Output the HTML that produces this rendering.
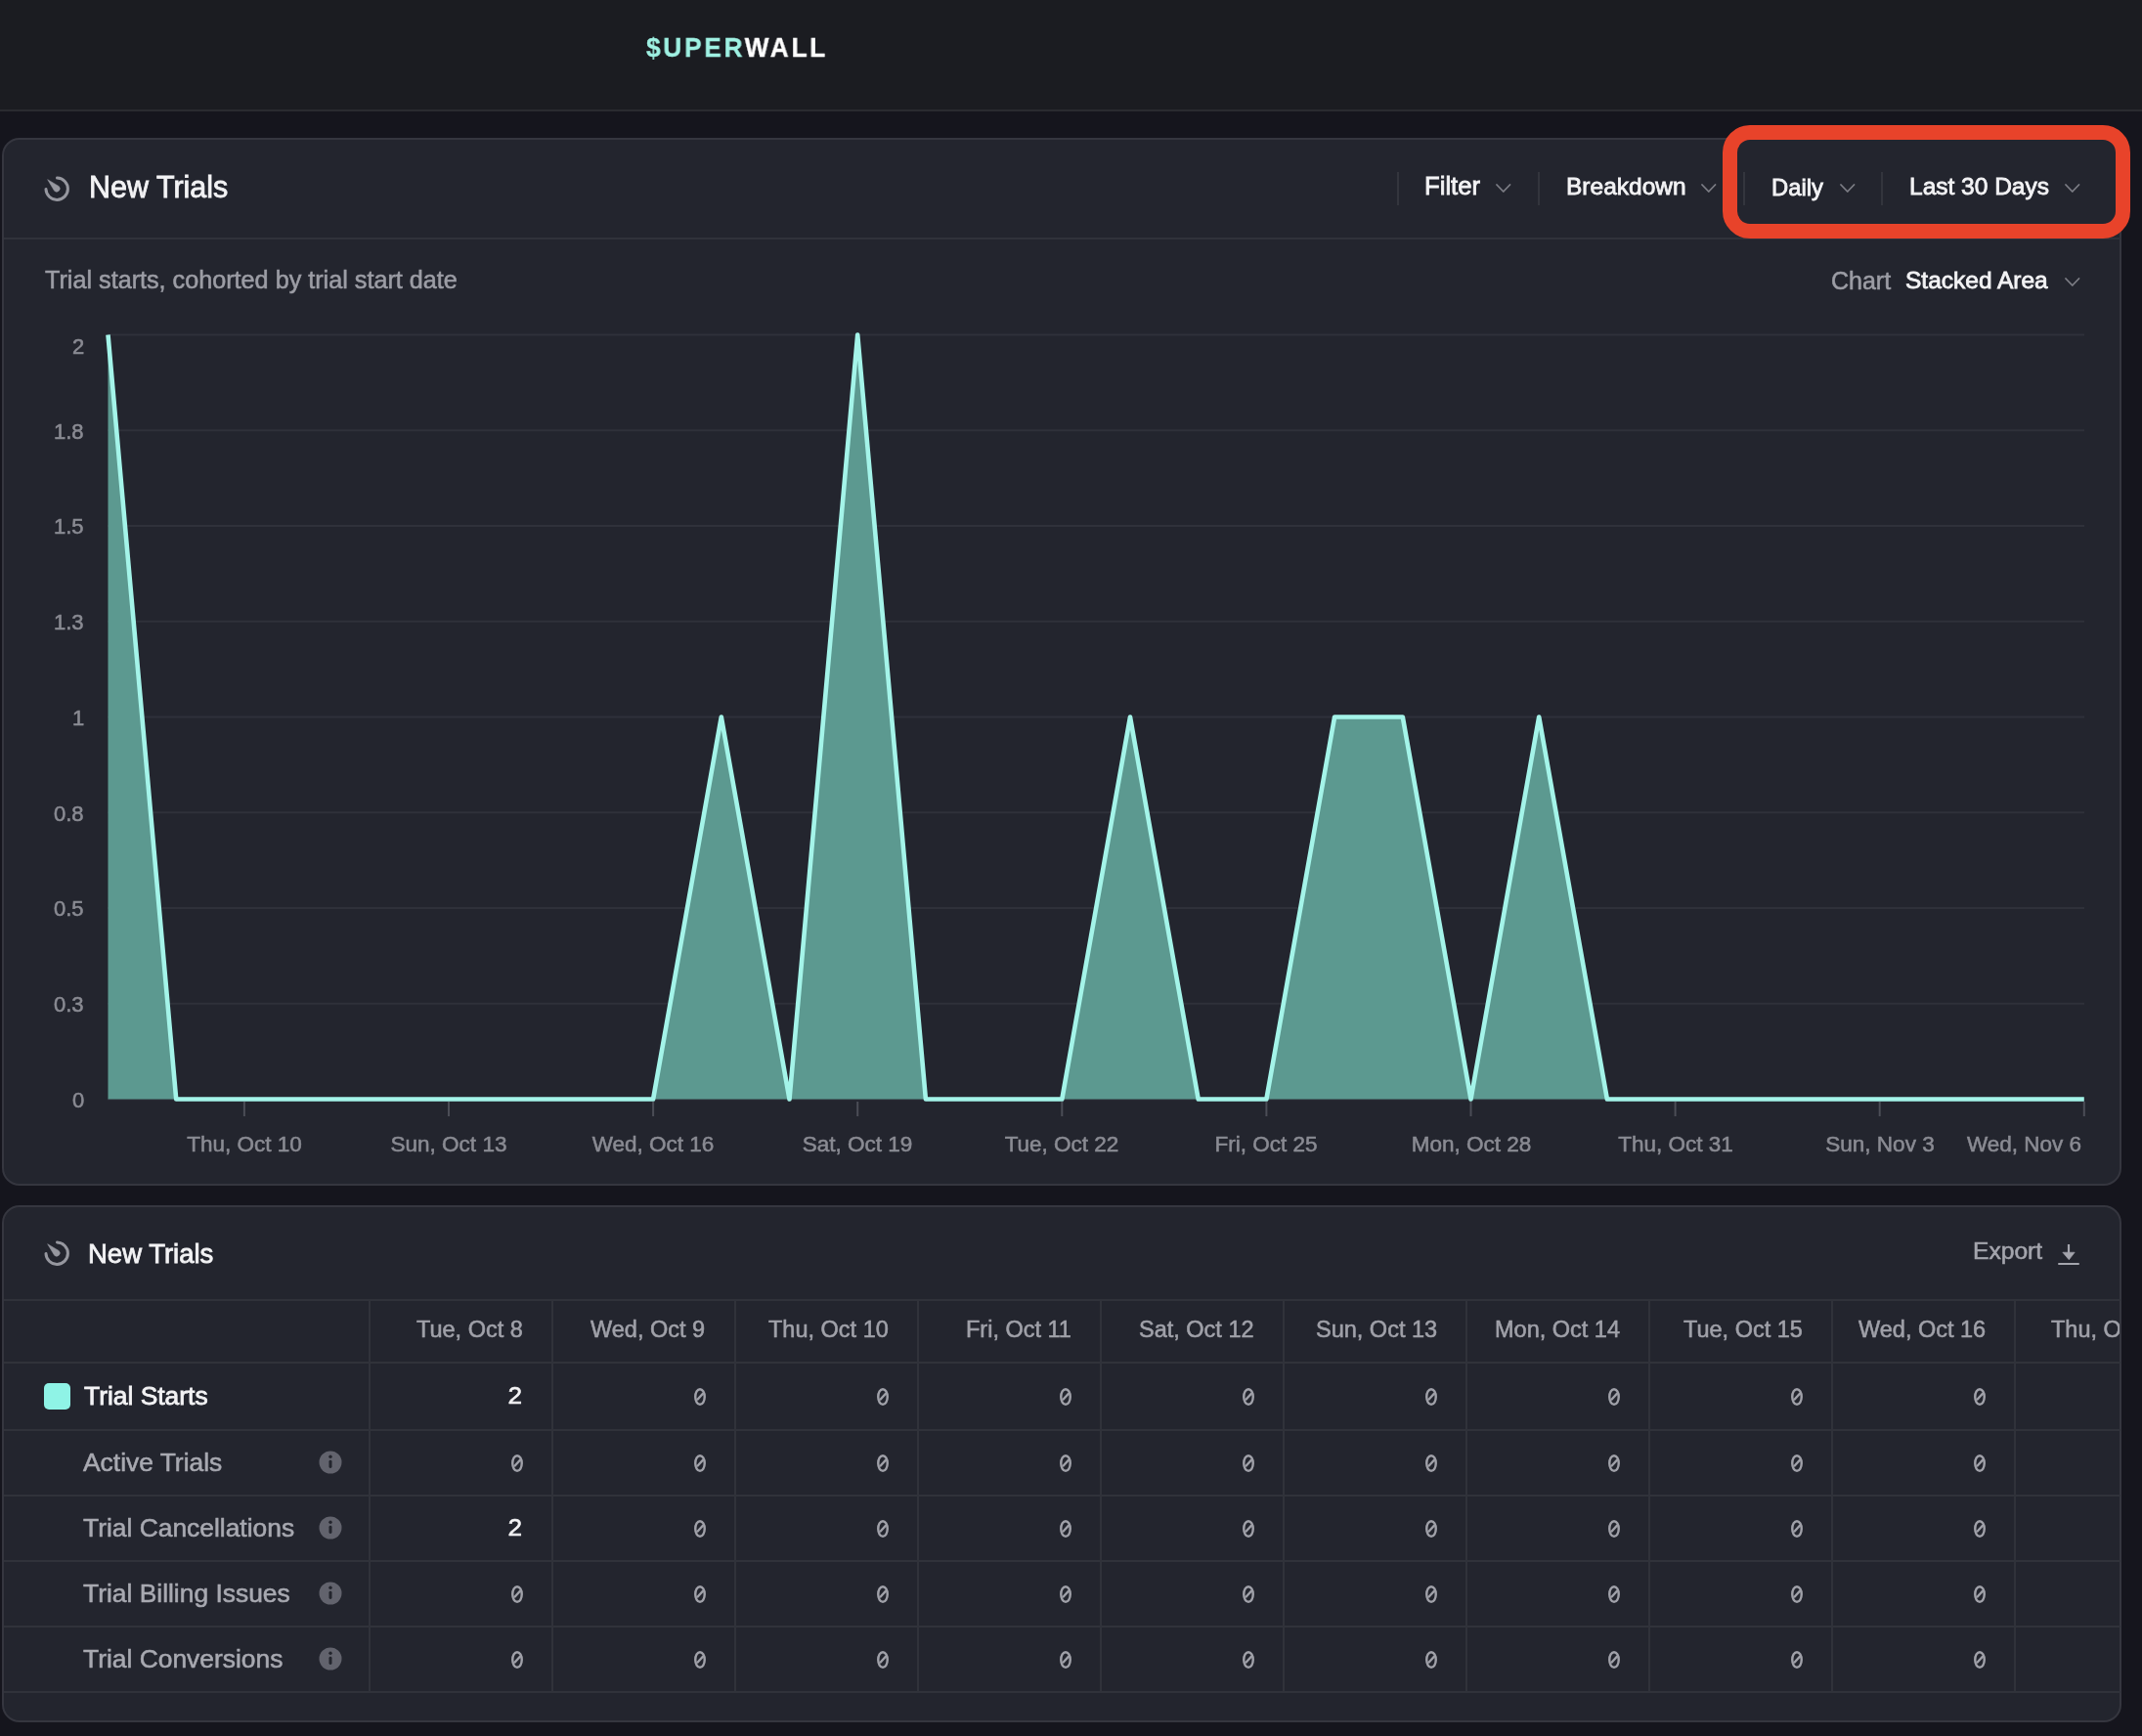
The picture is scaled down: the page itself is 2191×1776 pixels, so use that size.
<!DOCTYPE html>
<html><head><meta charset="utf-8">
<style>
*{box-sizing:border-box;margin:0;padding:0}
html,body{width:2191px;height:1776px;overflow:hidden;background:#15151d;font-family:"Liberation Sans",sans-serif;color:#f2f2f4;position:relative}
.a{position:absolute}
.t{position:absolute;white-space:nowrap;line-height:1;will-change:transform}
.m{font-family:"Liberation Mono",monospace}
.w{-webkit-text-stroke:0.8px currentColor}
.g{-webkit-text-stroke:0.55px currentColor}
</style></head><body>
<div class="a" style="left:0;top:0;width:2191px;height:112px;background:#1b1c21"></div>
<div class="a" style="left:0;top:112px;width:2191px;height:2px;background:#2a2b30"></div>
<div class="t " style="left:660.50px;top:33.87px;font-size:28.5px;color:#ffffff;font-weight:700;letter-spacing:3px;-webkit-text-stroke:0.3px currentColor;transform:scaleX(0.92);transform-origin:0 0"><span style="color:#9ff1e3">$UPER</span>WALL</div>
<div class="a" style="left:2px;top:141px;width:2168px;height:1072px;background:#23252e;border:2px solid #35363f;border-radius:18px"></div>
<div class="a" style="left:2px;top:1233px;width:2168px;height:529px;background:#23252e;border:2px solid #35363f;border-radius:18px"></div>
<svg class="a" style="left:41.5px;top:177px" width="32" height="32" viewBox="-16 -16 32 32"><path d="M -11 0.5 A 11.2 11.2 0 1 0 0.5 -11" fill="none" stroke="#96979f" stroke-width="3" stroke-linecap="round"/><path d="M -9.3 -9.3 L 2.33 -2.33 A 3.3 3.3 0 0 1 -2.33 2.33 Z" fill="#96979f" stroke="#96979f" stroke-width="0.6" stroke-linejoin="round"/></svg>
<div class="t w" style="left:90.50px;top:176.18px;font-size:30.5px;color:#f3f3f5;">New Trials</div>
<div class="a" style="left:1429px;top:176px;width:2px;height:34px;background:#33353d"></div>
<div class="a" style="left:1573px;top:176px;width:2px;height:34px;background:#33353d"></div>
<div class="a" style="left:1783px;top:176px;width:2px;height:34px;background:#33353d"></div>
<div class="a" style="left:1924px;top:176px;width:2px;height:34px;background:#33353d"></div>
<div class="t w" style="left:1457.00px;top:178.24px;font-size:25.7px;color:#f3f3f5;">Filter</div>
<svg class="a" style="left:1528.7px;top:187px" width="17.5" height="11" viewBox="-2 -2 17.5 11"><path d="M0 0 L6.75 7 L13.5 0" fill="none" stroke="#7c7d85" stroke-width="1.8" stroke-linecap="round" stroke-linejoin="round"/></svg>
<div class="t w" style="left:1602.00px;top:179.26px;font-size:24.5px;color:#f3f3f5;">Breakdown</div>
<svg class="a" style="left:1738.7px;top:187px" width="17.5" height="11" viewBox="-2 -2 17.5 11"><path d="M0 0 L6.75 7 L13.5 0" fill="none" stroke="#7c7d85" stroke-width="1.8" stroke-linecap="round" stroke-linejoin="round"/></svg>
<div class="t w" style="left:1812.00px;top:179.85px;font-size:23.8px;color:#f3f3f5;">Daily</div>
<svg class="a" style="left:1880.7px;top:187px" width="17.5" height="11" viewBox="-2 -2 17.5 11"><path d="M0 0 L6.75 7 L13.5 0" fill="none" stroke="#7c7d85" stroke-width="1.8" stroke-linecap="round" stroke-linejoin="round"/></svg>
<div class="t w" style="left:1953.00px;top:179.26px;font-size:24.5px;color:#f3f3f5;">Last 30 Days</div>
<svg class="a" style="left:2110.7px;top:187px" width="17.5" height="11" viewBox="-2 -2 17.5 11"><path d="M0 0 L6.75 7 L13.5 0" fill="none" stroke="#7c7d85" stroke-width="1.8" stroke-linecap="round" stroke-linejoin="round"/></svg>
<div class="a" style="left:4px;top:243px;width:2165px;height:2px;background:#30323a"></div>
<div class="t g" style="left:45.50px;top:274.17px;font-size:25.2px;color:#9c9da5;">Trial starts, cohorted by trial start date</div>
<div class="t g" style="left:1873.00px;top:274.84px;font-size:25px;color:#9c9da5;">Chart</div>
<div class="t w" style="left:1949.00px;top:275.26px;font-size:24.5px;color:#f3f3f5;">Stacked Area</div>
<svg class="a" style="left:2110.7px;top:283px" width="17.5" height="11" viewBox="-2 -2 17.5 11"><path d="M0 0 L6.75 7 L13.5 0" fill="none" stroke="#7c7d85" stroke-width="1.8" stroke-linecap="round" stroke-linejoin="round"/></svg>
<svg class="a" style="left:0;top:0" width="2191" height="1776" viewBox="0 0 2191 1776"><rect x="110" y="341.50" width="2022" height="2" fill="#2f313a"/><rect x="110" y="439.25" width="2022" height="2" fill="#2f313a"/><rect x="110" y="537.00" width="2022" height="2" fill="#2f313a"/><rect x="110" y="634.75" width="2022" height="2" fill="#2f313a"/><rect x="110" y="732.50" width="2022" height="2" fill="#2f313a"/><rect x="110" y="830.25" width="2022" height="2" fill="#2f313a"/><rect x="110" y="928.00" width="2022" height="2" fill="#2f313a"/><rect x="110" y="1025.75" width="2022" height="2" fill="#2f313a"/><rect x="110" y="1123.50" width="2022" height="2" fill="#2f313a"/><polygon points="110.50,1124.5 110.50,342.50 180.20,1124.50 249.90,1124.50 319.60,1124.50 389.30,1124.50 459.00,1124.50 528.70,1124.50 598.40,1124.50 668.10,1124.50 737.80,733.50 807.50,1124.50 877.20,342.50 946.90,1124.50 1016.60,1124.50 1086.30,1124.50 1156.00,733.50 1225.70,1124.50 1295.40,1124.50 1365.10,733.50 1434.80,733.50 1504.50,1124.50 1574.20,733.50 1643.90,1124.50 1713.60,1124.50 1783.30,1124.50 1853.00,1124.50 1922.70,1124.50 1992.40,1124.50 2062.10,1124.50 2131.80,1124.50 2131.80,1124.5" fill="#5c9990"/><polyline points="110.50,342.50 180.20,1124.50 249.90,1124.50 319.60,1124.50 389.30,1124.50 459.00,1124.50 528.70,1124.50 598.40,1124.50 668.10,1124.50 737.80,733.50 807.50,1124.50 877.20,342.50 946.90,1124.50 1016.60,1124.50 1086.30,1124.50 1156.00,733.50 1225.70,1124.50 1295.40,1124.50 1365.10,733.50 1434.80,733.50 1504.50,1124.50 1574.20,733.50 1643.90,1124.50 1713.60,1124.50 1783.30,1124.50 1853.00,1124.50 1922.70,1124.50 1992.40,1124.50 2062.10,1124.50 2131.80,1124.50" fill="none" stroke="#a4f4e9" stroke-width="4.6" stroke-linejoin="round" stroke-linecap="butt"/><rect x="248.90" y="1127" width="2" height="15" fill="#4b4d56"/><rect x="458.00" y="1127" width="2" height="15" fill="#4b4d56"/><rect x="667.10" y="1127" width="2" height="15" fill="#4b4d56"/><rect x="876.20" y="1127" width="2" height="15" fill="#4b4d56"/><rect x="1085.30" y="1127" width="2" height="15" fill="#4b4d56"/><rect x="1294.40" y="1127" width="2" height="15" fill="#4b4d56"/><rect x="1503.50" y="1127" width="2" height="15" fill="#4b4d56"/><rect x="1712.60" y="1127" width="2" height="15" fill="#4b4d56"/><rect x="1921.70" y="1127" width="2" height="15" fill="#4b4d56"/><rect x="2130.80" y="1127" width="2" height="15" fill="#4b4d56"/></svg>
<div class="t g" style="right:2105.00px;top:344.25px;font-size:22px;color:#8a8b93;">2</div>
<div class="t g" style="right:2105.00px;top:430.50px;font-size:22px;color:#8a8b93;">1.8</div>
<div class="t g" style="right:2105.00px;top:528.25px;font-size:22px;color:#8a8b93;">1.5</div>
<div class="t g" style="right:2105.00px;top:626.00px;font-size:22px;color:#8a8b93;">1.3</div>
<div class="t g" style="right:2105.00px;top:723.75px;font-size:22px;color:#8a8b93;">1</div>
<div class="t g" style="right:2105.00px;top:821.50px;font-size:22px;color:#8a8b93;">0.8</div>
<div class="t g" style="right:2105.00px;top:919.25px;font-size:22px;color:#8a8b93;">0.5</div>
<div class="t g" style="right:2105.00px;top:1017.00px;font-size:22px;color:#8a8b93;">0.3</div>
<div class="t g" style="right:2105.00px;top:1114.75px;font-size:22px;color:#8a8b93;">0</div>
<div class="t g" style="left:249.90px;transform:translateX(-50%);top:1159.95px;font-size:22.5px;color:#8a8b93;">Thu, Oct 10</div>
<div class="t g" style="left:459.00px;transform:translateX(-50%);top:1159.95px;font-size:22.5px;color:#8a8b93;">Sun, Oct 13</div>
<div class="t g" style="left:668.10px;transform:translateX(-50%);top:1159.95px;font-size:22.5px;color:#8a8b93;">Wed, Oct 16</div>
<div class="t g" style="left:877.20px;transform:translateX(-50%);top:1159.95px;font-size:22.5px;color:#8a8b93;">Sat, Oct 19</div>
<div class="t g" style="left:1086.30px;transform:translateX(-50%);top:1159.95px;font-size:22.5px;color:#8a8b93;">Tue, Oct 22</div>
<div class="t g" style="left:1295.40px;transform:translateX(-50%);top:1159.95px;font-size:22.5px;color:#8a8b93;">Fri, Oct 25</div>
<div class="t g" style="left:1504.50px;transform:translateX(-50%);top:1159.95px;font-size:22.5px;color:#8a8b93;">Mon, Oct 28</div>
<div class="t g" style="left:1713.60px;transform:translateX(-50%);top:1159.95px;font-size:22.5px;color:#8a8b93;">Thu, Oct 31</div>
<div class="t g" style="left:1922.70px;transform:translateX(-50%);top:1159.95px;font-size:22.5px;color:#8a8b93;">Sun, Nov 3</div>
<div class="t g" style="right:62.00px;top:1159.95px;font-size:22.5px;color:#8a8b93;">Wed, Nov 6</div>
<div class="a" style="left:1762px;top:127.5px;width:417px;height:116.5px;border:15px solid #e8432a;border-radius:28px"></div>
<svg class="a" style="left:41.5px;top:1266px" width="32" height="32" viewBox="-16 -16 32 32"><path d="M -11 0.5 A 11.2 11.2 0 1 0 0.5 -11" fill="none" stroke="#96979f" stroke-width="3" stroke-linecap="round"/><path d="M -9.3 -9.3 L 2.33 -2.33 A 3.3 3.3 0 0 1 -2.33 2.33 Z" fill="#96979f" stroke="#96979f" stroke-width="0.6" stroke-linejoin="round"/></svg>
<div class="t w" style="left:90.00px;top:1268.72px;font-size:27.5px;color:#f3f3f5;">New Trials</div>
<div class="t g" style="right:102.00px;top:1268.18px;font-size:24.6px;color:#a4a5ad;">Export</div>
<svg class="a" style="left:2100px;top:1268px" width="32" height="32" viewBox="0 0 32 32"><path d="M16 5 L16 15" stroke="#a4a5ad" stroke-width="2.2"/><path d="M9.8 13.2 L22.2 13.2 L16.3 20.8 Z" fill="#a4a5ad" stroke="#a4a5ad" stroke-width="0.6" stroke-linejoin="round"/><rect x="5" y="23.9" width="22" height="2.2" rx="1" fill="#a4a5ad"/></svg>
<div class="a" style="left:4px;top:1329px;width:2165px;height:403px;overflow:hidden"><div class="a" style="left:0;top:0px;width:2165px;height:2px;background:#30323a"></div><div class="a" style="left:0;top:64px;width:2165px;height:2px;background:#30323a"></div><div class="a" style="left:0;top:133px;width:2165px;height:2px;background:#30323a"></div><div class="a" style="left:0;top:200px;width:2165px;height:2px;background:#30323a"></div><div class="a" style="left:0;top:267px;width:2165px;height:2px;background:#30323a"></div><div class="a" style="left:0;top:334px;width:2165px;height:2px;background:#30323a"></div><div class="a" style="left:0;top:401px;width:2165px;height:2px;background:#30323a"></div><div class="a" style="left:372.50px;top:0;width:2px;height:402px;background:#30323a"></div><div class="a" style="left:559.55px;top:0;width:2px;height:402px;background:#30323a"></div><div class="a" style="left:746.60px;top:0;width:2px;height:402px;background:#30323a"></div><div class="a" style="left:933.65px;top:0;width:2px;height:402px;background:#30323a"></div><div class="a" style="left:1120.70px;top:0;width:2px;height:402px;background:#30323a"></div><div class="a" style="left:1307.75px;top:0;width:2px;height:402px;background:#30323a"></div><div class="a" style="left:1494.80px;top:0;width:2px;height:402px;background:#30323a"></div><div class="a" style="left:1681.85px;top:0;width:2px;height:402px;background:#30323a"></div><div class="a" style="left:1868.90px;top:0;width:2px;height:402px;background:#30323a"></div><div class="a" style="left:2055.95px;top:0;width:2px;height:402px;background:#30323a"></div></div>
<div class="a" style="left:0;top:0;width:2168px;height:1776px;overflow:hidden"><div class="t g" style="right:1633.45px;top:1349.11px;font-size:23.5px;color:#a0a1a9;">Tue, Oct 8</div>
<div class="t g" style="right:1446.40px;top:1349.11px;font-size:23.5px;color:#a0a1a9;">Wed, Oct 9</div>
<div class="t g" style="right:1259.35px;top:1349.11px;font-size:23.5px;color:#a0a1a9;">Thu, Oct 10</div>
<div class="t g" style="right:1072.30px;top:1349.11px;font-size:23.5px;color:#a0a1a9;">Fri, Oct 11</div>
<div class="t g" style="right:885.25px;top:1349.11px;font-size:23.5px;color:#a0a1a9;">Sat, Oct 12</div>
<div class="t g" style="right:698.20px;top:1349.11px;font-size:23.5px;color:#a0a1a9;">Sun, Oct 13</div>
<div class="t g" style="right:511.15px;top:1349.11px;font-size:23.5px;color:#a0a1a9;">Mon, Oct 14</div>
<div class="t g" style="right:324.10px;top:1349.11px;font-size:23.5px;color:#a0a1a9;">Tue, Oct 15</div>
<div class="t g" style="right:137.05px;top:1349.11px;font-size:23.5px;color:#a0a1a9;">Wed, Oct 16</div>
<div class="t g" style="left:2098.00px;top:1349.11px;font-size:23.5px;color:#a0a1a9;">Thu, O</div>
</div>
<div class="a" style="left:45px;top:1415px;width:27px;height:27px;border-radius:5px;background:#8ff3e6"></div>
<div class="t w" style="left:85.50px;top:1414.60px;font-size:26.4px;color:#f3f3f5;">Trial Starts</div>
<div class="t m g" style="right:1655.95px;top:1416.29px;font-size:26px;color:#f3f3f5;">2</div>
<svg class="a" style="left:707.60px;top:1418.10px" width="16" height="22" viewBox="-8 -11 16 22"><ellipse cx="0" cy="0" rx="4.75" ry="7.8" fill="none" stroke="#a0a1a9" stroke-width="2.4"/><path d="M 3.3 -3.6 L -3.0 3.3" stroke="#a0a1a9" stroke-width="2.3"/></svg>
<svg class="a" style="left:894.65px;top:1418.10px" width="16" height="22" viewBox="-8 -11 16 22"><ellipse cx="0" cy="0" rx="4.75" ry="7.8" fill="none" stroke="#a0a1a9" stroke-width="2.4"/><path d="M 3.3 -3.6 L -3.0 3.3" stroke="#a0a1a9" stroke-width="2.3"/></svg>
<svg class="a" style="left:1081.70px;top:1418.10px" width="16" height="22" viewBox="-8 -11 16 22"><ellipse cx="0" cy="0" rx="4.75" ry="7.8" fill="none" stroke="#a0a1a9" stroke-width="2.4"/><path d="M 3.3 -3.6 L -3.0 3.3" stroke="#a0a1a9" stroke-width="2.3"/></svg>
<svg class="a" style="left:1268.75px;top:1418.10px" width="16" height="22" viewBox="-8 -11 16 22"><ellipse cx="0" cy="0" rx="4.75" ry="7.8" fill="none" stroke="#a0a1a9" stroke-width="2.4"/><path d="M 3.3 -3.6 L -3.0 3.3" stroke="#a0a1a9" stroke-width="2.3"/></svg>
<svg class="a" style="left:1455.80px;top:1418.10px" width="16" height="22" viewBox="-8 -11 16 22"><ellipse cx="0" cy="0" rx="4.75" ry="7.8" fill="none" stroke="#a0a1a9" stroke-width="2.4"/><path d="M 3.3 -3.6 L -3.0 3.3" stroke="#a0a1a9" stroke-width="2.3"/></svg>
<svg class="a" style="left:1642.85px;top:1418.10px" width="16" height="22" viewBox="-8 -11 16 22"><ellipse cx="0" cy="0" rx="4.75" ry="7.8" fill="none" stroke="#a0a1a9" stroke-width="2.4"/><path d="M 3.3 -3.6 L -3.0 3.3" stroke="#a0a1a9" stroke-width="2.3"/></svg>
<svg class="a" style="left:1829.90px;top:1418.10px" width="16" height="22" viewBox="-8 -11 16 22"><ellipse cx="0" cy="0" rx="4.75" ry="7.8" fill="none" stroke="#a0a1a9" stroke-width="2.4"/><path d="M 3.3 -3.6 L -3.0 3.3" stroke="#a0a1a9" stroke-width="2.3"/></svg>
<svg class="a" style="left:2016.95px;top:1418.10px" width="16" height="22" viewBox="-8 -11 16 22"><ellipse cx="0" cy="0" rx="4.75" ry="7.8" fill="none" stroke="#a0a1a9" stroke-width="2.4"/><path d="M 3.3 -3.6 L -3.0 3.3" stroke="#a0a1a9" stroke-width="2.3"/></svg>
<div class="t g" style="left:85.00px;top:1482.60px;font-size:26.4px;color:#a8a9b1;">Active Trials</div>
<svg class="a" style="left:325.5px;top:1483.5px" width="24" height="24" viewBox="0 0 24 24"><circle cx="12" cy="12" r="11.5" fill="#62636d"/><rect x="10.5" y="9.8" width="3" height="8.2" rx="1.4" fill="#23252d"/><circle cx="12" cy="6.3" r="1.7" fill="#23252d"/></svg>
<svg class="a" style="left:520.55px;top:1486.10px" width="16" height="22" viewBox="-8 -11 16 22"><ellipse cx="0" cy="0" rx="4.75" ry="7.8" fill="none" stroke="#a0a1a9" stroke-width="2.4"/><path d="M 3.3 -3.6 L -3.0 3.3" stroke="#a0a1a9" stroke-width="2.3"/></svg>
<svg class="a" style="left:707.60px;top:1486.10px" width="16" height="22" viewBox="-8 -11 16 22"><ellipse cx="0" cy="0" rx="4.75" ry="7.8" fill="none" stroke="#a0a1a9" stroke-width="2.4"/><path d="M 3.3 -3.6 L -3.0 3.3" stroke="#a0a1a9" stroke-width="2.3"/></svg>
<svg class="a" style="left:894.65px;top:1486.10px" width="16" height="22" viewBox="-8 -11 16 22"><ellipse cx="0" cy="0" rx="4.75" ry="7.8" fill="none" stroke="#a0a1a9" stroke-width="2.4"/><path d="M 3.3 -3.6 L -3.0 3.3" stroke="#a0a1a9" stroke-width="2.3"/></svg>
<svg class="a" style="left:1081.70px;top:1486.10px" width="16" height="22" viewBox="-8 -11 16 22"><ellipse cx="0" cy="0" rx="4.75" ry="7.8" fill="none" stroke="#a0a1a9" stroke-width="2.4"/><path d="M 3.3 -3.6 L -3.0 3.3" stroke="#a0a1a9" stroke-width="2.3"/></svg>
<svg class="a" style="left:1268.75px;top:1486.10px" width="16" height="22" viewBox="-8 -11 16 22"><ellipse cx="0" cy="0" rx="4.75" ry="7.8" fill="none" stroke="#a0a1a9" stroke-width="2.4"/><path d="M 3.3 -3.6 L -3.0 3.3" stroke="#a0a1a9" stroke-width="2.3"/></svg>
<svg class="a" style="left:1455.80px;top:1486.10px" width="16" height="22" viewBox="-8 -11 16 22"><ellipse cx="0" cy="0" rx="4.75" ry="7.8" fill="none" stroke="#a0a1a9" stroke-width="2.4"/><path d="M 3.3 -3.6 L -3.0 3.3" stroke="#a0a1a9" stroke-width="2.3"/></svg>
<svg class="a" style="left:1642.85px;top:1486.10px" width="16" height="22" viewBox="-8 -11 16 22"><ellipse cx="0" cy="0" rx="4.75" ry="7.8" fill="none" stroke="#a0a1a9" stroke-width="2.4"/><path d="M 3.3 -3.6 L -3.0 3.3" stroke="#a0a1a9" stroke-width="2.3"/></svg>
<svg class="a" style="left:1829.90px;top:1486.10px" width="16" height="22" viewBox="-8 -11 16 22"><ellipse cx="0" cy="0" rx="4.75" ry="7.8" fill="none" stroke="#a0a1a9" stroke-width="2.4"/><path d="M 3.3 -3.6 L -3.0 3.3" stroke="#a0a1a9" stroke-width="2.3"/></svg>
<svg class="a" style="left:2016.95px;top:1486.10px" width="16" height="22" viewBox="-8 -11 16 22"><ellipse cx="0" cy="0" rx="4.75" ry="7.8" fill="none" stroke="#a0a1a9" stroke-width="2.4"/><path d="M 3.3 -3.6 L -3.0 3.3" stroke="#a0a1a9" stroke-width="2.3"/></svg>
<div class="t g" style="left:85.00px;top:1549.60px;font-size:26.4px;color:#a8a9b1;">Trial Cancellations</div>
<svg class="a" style="left:325.5px;top:1550.5px" width="24" height="24" viewBox="0 0 24 24"><circle cx="12" cy="12" r="11.5" fill="#62636d"/><rect x="10.5" y="9.8" width="3" height="8.2" rx="1.4" fill="#23252d"/><circle cx="12" cy="6.3" r="1.7" fill="#23252d"/></svg>
<div class="t m g" style="right:1655.95px;top:1551.29px;font-size:26px;color:#f3f3f5;">2</div>
<svg class="a" style="left:707.60px;top:1553.10px" width="16" height="22" viewBox="-8 -11 16 22"><ellipse cx="0" cy="0" rx="4.75" ry="7.8" fill="none" stroke="#a0a1a9" stroke-width="2.4"/><path d="M 3.3 -3.6 L -3.0 3.3" stroke="#a0a1a9" stroke-width="2.3"/></svg>
<svg class="a" style="left:894.65px;top:1553.10px" width="16" height="22" viewBox="-8 -11 16 22"><ellipse cx="0" cy="0" rx="4.75" ry="7.8" fill="none" stroke="#a0a1a9" stroke-width="2.4"/><path d="M 3.3 -3.6 L -3.0 3.3" stroke="#a0a1a9" stroke-width="2.3"/></svg>
<svg class="a" style="left:1081.70px;top:1553.10px" width="16" height="22" viewBox="-8 -11 16 22"><ellipse cx="0" cy="0" rx="4.75" ry="7.8" fill="none" stroke="#a0a1a9" stroke-width="2.4"/><path d="M 3.3 -3.6 L -3.0 3.3" stroke="#a0a1a9" stroke-width="2.3"/></svg>
<svg class="a" style="left:1268.75px;top:1553.10px" width="16" height="22" viewBox="-8 -11 16 22"><ellipse cx="0" cy="0" rx="4.75" ry="7.8" fill="none" stroke="#a0a1a9" stroke-width="2.4"/><path d="M 3.3 -3.6 L -3.0 3.3" stroke="#a0a1a9" stroke-width="2.3"/></svg>
<svg class="a" style="left:1455.80px;top:1553.10px" width="16" height="22" viewBox="-8 -11 16 22"><ellipse cx="0" cy="0" rx="4.75" ry="7.8" fill="none" stroke="#a0a1a9" stroke-width="2.4"/><path d="M 3.3 -3.6 L -3.0 3.3" stroke="#a0a1a9" stroke-width="2.3"/></svg>
<svg class="a" style="left:1642.85px;top:1553.10px" width="16" height="22" viewBox="-8 -11 16 22"><ellipse cx="0" cy="0" rx="4.75" ry="7.8" fill="none" stroke="#a0a1a9" stroke-width="2.4"/><path d="M 3.3 -3.6 L -3.0 3.3" stroke="#a0a1a9" stroke-width="2.3"/></svg>
<svg class="a" style="left:1829.90px;top:1553.10px" width="16" height="22" viewBox="-8 -11 16 22"><ellipse cx="0" cy="0" rx="4.75" ry="7.8" fill="none" stroke="#a0a1a9" stroke-width="2.4"/><path d="M 3.3 -3.6 L -3.0 3.3" stroke="#a0a1a9" stroke-width="2.3"/></svg>
<svg class="a" style="left:2016.95px;top:1553.10px" width="16" height="22" viewBox="-8 -11 16 22"><ellipse cx="0" cy="0" rx="4.75" ry="7.8" fill="none" stroke="#a0a1a9" stroke-width="2.4"/><path d="M 3.3 -3.6 L -3.0 3.3" stroke="#a0a1a9" stroke-width="2.3"/></svg>
<div class="t g" style="left:85.00px;top:1616.60px;font-size:26.4px;color:#a8a9b1;">Trial Billing Issues</div>
<svg class="a" style="left:325.5px;top:1617.5px" width="24" height="24" viewBox="0 0 24 24"><circle cx="12" cy="12" r="11.5" fill="#62636d"/><rect x="10.5" y="9.8" width="3" height="8.2" rx="1.4" fill="#23252d"/><circle cx="12" cy="6.3" r="1.7" fill="#23252d"/></svg>
<svg class="a" style="left:520.55px;top:1620.10px" width="16" height="22" viewBox="-8 -11 16 22"><ellipse cx="0" cy="0" rx="4.75" ry="7.8" fill="none" stroke="#a0a1a9" stroke-width="2.4"/><path d="M 3.3 -3.6 L -3.0 3.3" stroke="#a0a1a9" stroke-width="2.3"/></svg>
<svg class="a" style="left:707.60px;top:1620.10px" width="16" height="22" viewBox="-8 -11 16 22"><ellipse cx="0" cy="0" rx="4.75" ry="7.8" fill="none" stroke="#a0a1a9" stroke-width="2.4"/><path d="M 3.3 -3.6 L -3.0 3.3" stroke="#a0a1a9" stroke-width="2.3"/></svg>
<svg class="a" style="left:894.65px;top:1620.10px" width="16" height="22" viewBox="-8 -11 16 22"><ellipse cx="0" cy="0" rx="4.75" ry="7.8" fill="none" stroke="#a0a1a9" stroke-width="2.4"/><path d="M 3.3 -3.6 L -3.0 3.3" stroke="#a0a1a9" stroke-width="2.3"/></svg>
<svg class="a" style="left:1081.70px;top:1620.10px" width="16" height="22" viewBox="-8 -11 16 22"><ellipse cx="0" cy="0" rx="4.75" ry="7.8" fill="none" stroke="#a0a1a9" stroke-width="2.4"/><path d="M 3.3 -3.6 L -3.0 3.3" stroke="#a0a1a9" stroke-width="2.3"/></svg>
<svg class="a" style="left:1268.75px;top:1620.10px" width="16" height="22" viewBox="-8 -11 16 22"><ellipse cx="0" cy="0" rx="4.75" ry="7.8" fill="none" stroke="#a0a1a9" stroke-width="2.4"/><path d="M 3.3 -3.6 L -3.0 3.3" stroke="#a0a1a9" stroke-width="2.3"/></svg>
<svg class="a" style="left:1455.80px;top:1620.10px" width="16" height="22" viewBox="-8 -11 16 22"><ellipse cx="0" cy="0" rx="4.75" ry="7.8" fill="none" stroke="#a0a1a9" stroke-width="2.4"/><path d="M 3.3 -3.6 L -3.0 3.3" stroke="#a0a1a9" stroke-width="2.3"/></svg>
<svg class="a" style="left:1642.85px;top:1620.10px" width="16" height="22" viewBox="-8 -11 16 22"><ellipse cx="0" cy="0" rx="4.75" ry="7.8" fill="none" stroke="#a0a1a9" stroke-width="2.4"/><path d="M 3.3 -3.6 L -3.0 3.3" stroke="#a0a1a9" stroke-width="2.3"/></svg>
<svg class="a" style="left:1829.90px;top:1620.10px" width="16" height="22" viewBox="-8 -11 16 22"><ellipse cx="0" cy="0" rx="4.75" ry="7.8" fill="none" stroke="#a0a1a9" stroke-width="2.4"/><path d="M 3.3 -3.6 L -3.0 3.3" stroke="#a0a1a9" stroke-width="2.3"/></svg>
<svg class="a" style="left:2016.95px;top:1620.10px" width="16" height="22" viewBox="-8 -11 16 22"><ellipse cx="0" cy="0" rx="4.75" ry="7.8" fill="none" stroke="#a0a1a9" stroke-width="2.4"/><path d="M 3.3 -3.6 L -3.0 3.3" stroke="#a0a1a9" stroke-width="2.3"/></svg>
<div class="t g" style="left:85.00px;top:1683.60px;font-size:26.4px;color:#a8a9b1;">Trial Conversions</div>
<svg class="a" style="left:325.5px;top:1684.5px" width="24" height="24" viewBox="0 0 24 24"><circle cx="12" cy="12" r="11.5" fill="#62636d"/><rect x="10.5" y="9.8" width="3" height="8.2" rx="1.4" fill="#23252d"/><circle cx="12" cy="6.3" r="1.7" fill="#23252d"/></svg>
<svg class="a" style="left:520.55px;top:1687.10px" width="16" height="22" viewBox="-8 -11 16 22"><ellipse cx="0" cy="0" rx="4.75" ry="7.8" fill="none" stroke="#a0a1a9" stroke-width="2.4"/><path d="M 3.3 -3.6 L -3.0 3.3" stroke="#a0a1a9" stroke-width="2.3"/></svg>
<svg class="a" style="left:707.60px;top:1687.10px" width="16" height="22" viewBox="-8 -11 16 22"><ellipse cx="0" cy="0" rx="4.75" ry="7.8" fill="none" stroke="#a0a1a9" stroke-width="2.4"/><path d="M 3.3 -3.6 L -3.0 3.3" stroke="#a0a1a9" stroke-width="2.3"/></svg>
<svg class="a" style="left:894.65px;top:1687.10px" width="16" height="22" viewBox="-8 -11 16 22"><ellipse cx="0" cy="0" rx="4.75" ry="7.8" fill="none" stroke="#a0a1a9" stroke-width="2.4"/><path d="M 3.3 -3.6 L -3.0 3.3" stroke="#a0a1a9" stroke-width="2.3"/></svg>
<svg class="a" style="left:1081.70px;top:1687.10px" width="16" height="22" viewBox="-8 -11 16 22"><ellipse cx="0" cy="0" rx="4.75" ry="7.8" fill="none" stroke="#a0a1a9" stroke-width="2.4"/><path d="M 3.3 -3.6 L -3.0 3.3" stroke="#a0a1a9" stroke-width="2.3"/></svg>
<svg class="a" style="left:1268.75px;top:1687.10px" width="16" height="22" viewBox="-8 -11 16 22"><ellipse cx="0" cy="0" rx="4.75" ry="7.8" fill="none" stroke="#a0a1a9" stroke-width="2.4"/><path d="M 3.3 -3.6 L -3.0 3.3" stroke="#a0a1a9" stroke-width="2.3"/></svg>
<svg class="a" style="left:1455.80px;top:1687.10px" width="16" height="22" viewBox="-8 -11 16 22"><ellipse cx="0" cy="0" rx="4.75" ry="7.8" fill="none" stroke="#a0a1a9" stroke-width="2.4"/><path d="M 3.3 -3.6 L -3.0 3.3" stroke="#a0a1a9" stroke-width="2.3"/></svg>
<svg class="a" style="left:1642.85px;top:1687.10px" width="16" height="22" viewBox="-8 -11 16 22"><ellipse cx="0" cy="0" rx="4.75" ry="7.8" fill="none" stroke="#a0a1a9" stroke-width="2.4"/><path d="M 3.3 -3.6 L -3.0 3.3" stroke="#a0a1a9" stroke-width="2.3"/></svg>
<svg class="a" style="left:1829.90px;top:1687.10px" width="16" height="22" viewBox="-8 -11 16 22"><ellipse cx="0" cy="0" rx="4.75" ry="7.8" fill="none" stroke="#a0a1a9" stroke-width="2.4"/><path d="M 3.3 -3.6 L -3.0 3.3" stroke="#a0a1a9" stroke-width="2.3"/></svg>
<svg class="a" style="left:2016.95px;top:1687.10px" width="16" height="22" viewBox="-8 -11 16 22"><ellipse cx="0" cy="0" rx="4.75" ry="7.8" fill="none" stroke="#a0a1a9" stroke-width="2.4"/><path d="M 3.3 -3.6 L -3.0 3.3" stroke="#a0a1a9" stroke-width="2.3"/></svg>
</body></html>
